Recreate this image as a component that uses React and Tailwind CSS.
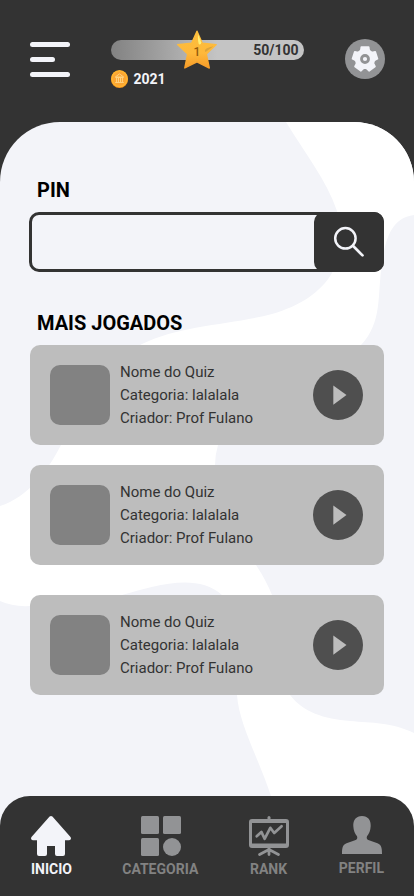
import React from "react";

function gearPoints() {
  const pts = [];
  for (let i = 0; i < 5; i++) {
    const base = -90 + i * 72;
    [[-28, 9.3], [-22, 10.4], [-17, 12.4], [17, 12.4], [22, 10.4], [28, 9.3]].forEach(([d, r]) => {
      const a = ((base + d) * Math.PI) / 180;
      pts.push(`${(20 + r * Math.cos(a)).toFixed(2)},${(20 + r * Math.sin(a)).toFixed(2)}`);
    });
  }
  return pts.join(" ");
}

function Gear() {
  return (
    <svg className="size-10" viewBox="0 0 40 40">
      <circle cx="20" cy="20" r="20" fill="#929395" />
      <polygon points={gearPoints()} fill="#f3f4f9" stroke="#f3f4f9" strokeWidth="1.8" strokeLinejoin="round" />
      <circle cx="20" cy="20" r="3.5" fill="#f3f4f9" stroke="#929395" strokeWidth="2.8" />
    </svg>
  );
}

function Star() {
  return (
    <svg className="block h-10 w-[42px]" viewBox="0 0 42 40">
      <defs>
        <linearGradient id="starFill" x1="0" y1="0" x2="0" y2="1">
          <stop offset="0" stopColor="#fdbf3c" />
          <stop offset=".6" stopColor="#feb83b" />
          <stop offset="1" stopColor="#f79c28" />
        </linearGradient>
      </defs>
      <path
        d="M21 1.2 L26.3 13.3 L40.2 14.6 L30.3 23.9 L33.3 38 L21 31.8 L8.8 38 L11.7 23.9 L1.6 14.6 L15.6 13.3 Z"
        fill="url(#starFill)"
        stroke="url(#starFill)"
        strokeWidth="1.4"
        strokeLinejoin="round"
      />
      <path d="M22 4.2 L25.2 12.2 Q25.4 14.6 23.3 14.4 Q21.6 13.6 22 4.2Z" fill="#fff176" />
      <path d="M37.5 16.2 L29.6 22 Q27.8 20.6 30.5 18.6 Q33 16.8 37.5 16.2Z" fill="#dda43b" />
    </svg>
  );
}

function Coin() {
  return (
    <svg className="h-[18px] w-[17px]" viewBox="0 0 17 18">
      <ellipse cx="8.5" cy="9.2" rx="8.5" ry="8.8" fill="#f28f1d" />
      <ellipse cx="8.5" cy="8.7" rx="8.4" ry="8.6" fill="#ffb32f" />
      <ellipse cx="8.5" cy="8.8" rx="6.7" ry="7" fill="#fba534" />
      <path d="M4.3 7 L8.5 3.9 L12.7 7Z M4.6 7.5h7.8 M5.6 8v4 M7.5 8v4 M9.5 8v4 M11.4 8v4 M4.2 12.5h8.6" fill="none" stroke="#ffd27f" strokeWidth="1" />
    </svg>
  );
}

function Backdrop() {
  return (
    <svg className="absolute inset-0 h-[774px] w-[414px]" viewBox="0 122 414 774">
      <path
        fill="#fff"
        d="M286 122 C306 155 326 179 337 211 C341 230 341 254 332 273 C321 292 300 306 272 314 C230 325 180 325 142 344 C100 366 84 405 61 445 C47 472 28 497 0 506 V601 Q13 607 30 606 C62 606 90 605 122 595 C154 586 197 572 222 595 C250 622 233 665 237 695 C239 724 258 757 271 796 V896 H414 V733 C391 722 372 723 350 721 C324 719 303 712 290 695 C272 670 290 635 272 595 Q266 580 256 565 C235 534 211 500 215 465 Q215 455 218 445 C240 385 320 390 361 345 C383 322 377 294 382 264 C385 242 390 218 414 215 V122 Z"
      />
    </svg>
  );
}

function QuizCard() {
  return (
    <article className="flex h-[100px] items-center rounded-[10px] bg-[#bdbdbd] pr-[21px] pl-5">
      <div className="size-[60px] rounded-[10px] bg-[#828282]" />
      <div className="ml-2.5 flex-1 text-[15px] leading-[23px] text-[#333333]">
        <p>Nome do Quiz</p>
        <p>Categoria: lalalala</p>
        <p>Criador: Prof Fulano</p>
      </div>
      <button className="flex size-[50px] items-center justify-center rounded-full bg-[#4f4f4f]">
        <svg className="size-[50px]" viewBox="0 0 50 50">
          <path d="M20.3 15.5 L33.5 25 L20.3 34.7Z" fill="#bdbdbd" />
        </svg>
      </button>
    </article>
  );
}

function HomeIcon() {
  return (
    <svg className="size-10" viewBox="0 0 40 40" fill="#f3f4f9">
      <path d="M18.6 .6 Q20 -.6 21.4 .6 L39.5 21 Q40.4 22.3 39.6 23.5 Q39 24.3 38 24.3 H34 V38 Q34 40 32 40 H26 Q24 40 24 38 V30 H16 V38 Q16 40 14 40 H8 Q6 40 6 38 V24.3 H2 Q1 24.3 .4 23.5 Q-.4 22.3 .5 21Z" />
    </svg>
  );
}

function CategoryIcon() {
  return (
    <svg className="ml-px size-10" viewBox="0 0 40 40" fill="#929395">
      <rect width="18" height="18" rx="1.5" />
      <rect x="22" width="18" height="18" rx="1.5" />
      <rect y="22" width="18" height="18" rx="1.5" />
      <circle cx="31" cy="31" r="9" />
    </svg>
  );
}

function RankIcon() {
  return (
    <svg className="size-10" viewBox="0 0 40 40" fill="none" stroke="#929395" strokeLinecap="round" strokeLinejoin="round">
      <path d="M20 1.5v3" strokeWidth="3" />
      <path fill="#929395" fillRule="evenodd" stroke="none" d="M3 3H37Q40 3 40 6V29Q40 32 37 32H3Q0 32 0 29V6Q0 3 3 3ZM3 7V27.5H37V7Z" />
      <path d="M7.7 20.3 L12.4 15.9 L15.6 22.8 L21.3 11.8 L25.2 17 L32.6 10.2" strokeWidth="2.7" />
      <path d="M20 32v6.5 M20 33.5 L10.6 38.5 M20 33.5 L29.4 38.5" strokeWidth="2.8" />
    </svg>
  );
}

function ProfileIcon() {
  return (
    <svg className="mb-px ml-px h-[38px] w-10" viewBox="0 0 40 38" fill="#929395">
      <path d="M20 0 C26 0 29 4.2 28.7 10 C28.5 14.8 27 18 25 20.2 C24.2 22.4 25 23.5 27 24.3 L35.5 27.3 C39.5 29 40 32 40 38 H0 C0 32 .5 29 4.5 27.3 L13 24.3 C15 23.5 15.8 22.4 15 20.2 C13 18 11.5 14.8 11.3 10 C11 4.2 14 0 20 0Z" />
    </svg>
  );
}

function NavItem({ icon, label, className = "" }) {
  return (
    <a className={`flex flex-col items-center ${className}`}>
      {icon}
      <span className="mt-[5px] text-sm leading-4 font-bold">{label}</span>
    </a>
  );
}

export default function App() {
  return (
    <div className="flex h-[896px] w-[414px] flex-col overflow-hidden bg-[#333333] font-[Roboto,sans-serif]">
      <header className="flex h-[122px] shrink-0 items-start pl-[30px]">
        <button className="mt-[42px] flex w-10 flex-col gap-2.5">
          <span className="h-[5px] w-10 rounded-full bg-[#f3f4f9]" />
          <span className="h-[5px] w-[25px] rounded-full bg-[#f3f4f9]" />
          <span className="h-[5px] w-10 rounded-full bg-[#f3f4f9]" />
        </button>
        <div className="mt-10 ml-[41px] w-[193px]">
          <div className="relative flex h-5 items-center justify-end rounded-full bg-[#c4c4c4] bg-linear-to-r from-[#828282] to-[#c4c4c4] to-55% pr-[5.5px]">
            <span className="text-sm leading-5 font-bold text-[#333333]">50/100</span>
            <div className="absolute -top-[10px] left-[65px]">
              <Star />
              <span className="absolute inset-x-0 top-[14px] text-center text-xs leading-4 font-medium text-[#935b0d]">1</span>
            </div>
          </div>
          <div className="mt-[10px] flex h-[18px] items-center gap-[5.5px]">
            <Coin />
            <span className="text-sm leading-[18px] font-bold text-[#f3f4f9]">2021</span>
          </div>
        </div>
        <button className="mt-[39px] ml-[41px]">
          <Gear />
        </button>
      </header>

      <main className="relative h-[674px] shrink-0">
        <div className="absolute inset-x-0 top-0 h-[774px] overflow-hidden rounded-t-[60px] bg-[#f3f4f9]">
          <Backdrop />
        </div>
        <div className="relative pt-14 pr-[30px] pl-[30px]">
          <h2 className="pl-[7px] text-xl leading-6 font-bold text-black">PIN</h2>
          <div className="mt-[10px] -ml-px flex h-[60px] rounded-[10px] border-[3px] border-[#333333] bg-[#f3f4f9]">
            <input className="min-w-0 flex-1 bg-transparent px-3 outline-none" aria-label="PIN" />
            <button className="-my-[3px] -mr-[3px] w-[70px] rounded-[10px] bg-[#333333]">
              <svg className="h-[60px] w-[70px]" viewBox="0 0 70 60" fill="none" stroke="#f3f4f9" strokeLinecap="round">
                <circle cx="31.4" cy="26.3" r="10.2" strokeWidth="2.5" />
                <path d="M38.9 33.8 L48.5 43.4" strokeWidth="2.7" />
              </svg>
            </button>
          </div>
          <h2 className="mt-[39px] pl-[7px] text-xl leading-6 font-bold text-black">MAIS JOGADOS</h2>
          <div className="mt-[10px] flex flex-col gap-5">
            <QuizCard />
            <QuizCard />
            <div className="mt-2.5">
              <QuizCard />
            </div>
          </div>
        </div>
      </main>

      <nav className="relative flex h-[100px] shrink-0 items-start justify-between rounded-t-[30px] bg-[#333333] pt-5 pr-[30px] pl-[31px]">
        <NavItem icon={<HomeIcon />} label="INICIO" className="text-[#f3f4f9]" />
        <NavItem icon={<CategoryIcon />} label="CATEGORIA" className="text-[#828282]" />
        <NavItem icon={<RankIcon />} label="RANK" className="text-[#828282]" />
        <NavItem icon={<ProfileIcon />} label="PERFIL" className="text-[#828282]" />
      </nav>
    </div>
  );
}
